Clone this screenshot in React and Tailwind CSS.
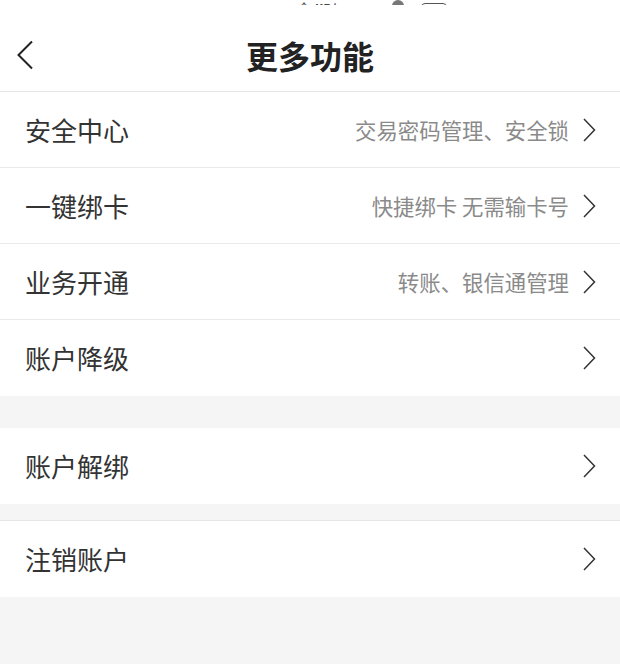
const groups = [
  [
    { label: "安全中心", hint: "交易密码管理、安全锁" },
    { label: "一键绑卡", hint: "快捷绑卡 无需输卡号" },
    { label: "业务开通", hint: "转账、银信通管理" },
    { label: "账户降级", hint: "" },
  ],
  [{ label: "账户解绑", hint: "" }],
  [{ label: "注销账户", hint: "" }],
];

function Row({ label, hint, last }) {
  return (
    <div className={`h-[76px] flex items-center pl-[25px] pr-[24px] bg-white ${last ? "" : "border-b border-[#e9e9e9]"}`}>
      <div className="text-[26px] text-[#333] leading-none">{label}</div>
      <div className="flex-1" />
      {hint && <div className="text-[21.4px] text-[#8a8a8a] leading-none mr-[13px]">{hint}</div>}
      <svg width="14" height="24" viewBox="0 0 14 24" fill="none">
        <path d="M2 1 L12.5 12 L2 23" stroke="#333" strokeWidth="1.5" />
      </svg>
    </div>
  );
}

export default function App() {
  return (
    <div className="w-full min-h-[664px] bg-[#f5f5f5]" style={{ fontFamily: '"Noto Sans CJK SC", "Noto Sans", sans-serif' }}>
      {/* header */}
      <div className="bg-white border-b border-[#e6e6e6]">
        {/* status bar, mostly scrolled out of view */}
        <div className="h-[5px] overflow-hidden flex items-end">
          <span className="ml-[298px] text-[12px] text-[#555] leading-none -mb-[9px]">↑</span>
          <span className="ml-[5px] text-[12px] font-bold text-[#444] leading-none -mb-[9px]">KB/s</span>
          <span className="ml-[50px] w-[12px] h-[12px] rounded-full bg-[#777] -mb-[7px]" />
          <span className="ml-[17px] w-[26px] h-[10px] border border-[#555] rounded-sm -mb-[8px]" />
        </div>
        <div className="h-[86px] pt-[14px] flex items-center">
          <svg className="ml-[16px]" width="18" height="30" viewBox="0 0 18 30" fill="none">
            <path d="M16 1.5 L2.5 15 L16 28.5" stroke="#222" strokeWidth="2" />
          </svg>
          <div className="flex-1 text-center text-[32px] font-bold text-[#222] leading-none pr-[34px]">更多功能</div>
        </div>
      </div>

      {/* groups */}
      <div>
        {groups[0].map((r, i) => (
          <Row key={r.label} {...r} last={i === groups[0].length - 1} />
        ))}
      </div>
      <div className="mt-[32px]">
        <Row {...groups[1][0]} last />
      </div>
      <div className="mt-[16px] border-t border-[#e6e6e6]">
        <Row {...groups[2][0]} last />
      </div>
    </div>
  );
}
